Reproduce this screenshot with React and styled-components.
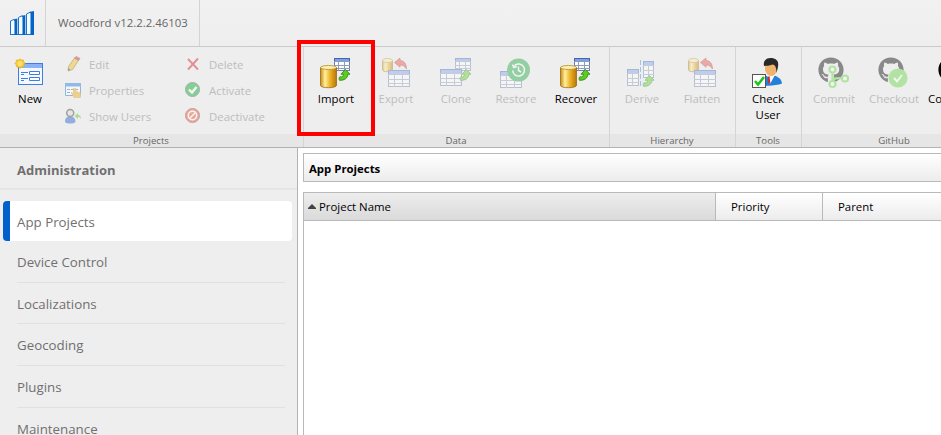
import React from "react";
import styled, { createGlobalStyle, css } from "styled-components";
import { FaGithub } from "react-icons/fa";

const Global = createGlobalStyle`
  * { box-sizing: border-box; }
  html, body { margin: 0; height: 100%; overflow: hidden; }
  body { font-family: "Open Sans", "Noto Sans", sans-serif; font-size: 11.4px; color: #000; background: #fff; }
  #root { height: 100%; }
`;

const Window = styled.div`
  position: relative;
  display: flex;
  flex-direction: column;
  width: 941px;
  height: 435px;
  overflow: hidden;
`;

const TopBar = styled.header`
  display: flex;
  flex: none;
  height: 47px;
  background: linear-gradient(#f1f1f1, #eeeeee);
  border-bottom: 1px solid #cacaca;
`;

const LogoCell = styled.div`
  width: 46px;
  padding: 10px 0 0 9px;
  border-right: 1px solid #d4d4d4;
`;

const TitleCell = styled.div`
  width: 154px;
  padding-left: 12px;
  line-height: 46px;
  color: #666;
  white-space: nowrap;
  border-right: 1px solid #d4d4d4;
`;

const Ribbon = styled.div`
  display: flex;
  flex: none;
  height: 101px;
  background: #eee;
  border-bottom: 1px solid #b2b2b2;
`;

const Group = styled.section`
  display: flex;
  flex: none;
  flex-direction: column;
  width: ${(p) => p.$width}px;
  border-right: 1px solid #d4d4d4;
`;

const GroupBody = styled.div`
  display: flex;
  flex: 1;
  padding-left: ${(p) => p.$inset ?? 2}px;
`;

const GroupLabel = styled.div`
  height: 13px;
  line-height: 13px;
  padding-right: 1px;
  font-size: 9.6px;
  text-align: center;
  color: #666;
  background: #e6e6e6;
`;

const BigButton = styled.div`
  flex: none;
  width: 60px;
  padding: 10px 2px 0;
  line-height: 16px;
  text-align: center;
  color: ${(p) => (p.$disabled ? "#bdbdbd" : "#000")};
  svg { display: block; margin: 0 auto 2px; opacity: ${(p) => (p.$disabled ? 0.42 : 1)}; }
  svg svg { opacity: 1; }
`;

const SmallColumn = styled.div`
  display: flex;
  flex-direction: column;
  width: 120px;
  padding: 4px 0 0 5px;
`;

const SmallButton = styled.div`
  display: flex;
  align-items: center;
  gap: 8px;
  height: 26px;
  color: #bdbdbd;
  white-space: nowrap;
  svg { flex: none; opacity: 0.5; }
`;

const Body = styled.div`
  display: flex;
  flex: 1;
  min-height: 0;
`;

const Sidebar = styled.nav`
  flex: none;
  width: 298px;
  background: #eee;
  border-right: 1px solid #b2b2b2;
  color: #707070;
  font-size: 13.3px;
`;

const SidebarTitle = styled.div`
  height: 42px;
  padding-left: 17px;
  line-height: 44px;
  font-size: 13px;
  font-weight: 700;
  border-bottom: 2px solid #e5e5e5;
`;

const navActive = css`
  height: 40px;
  margin: 11px 5px 0 3px;
  padding-left: 7px;
  line-height: 42px;
  background: #fff;
  border: 0 solid #0060cc;
  border-left-width: 7px;
  border-radius: 4px;
`;

const NavItem = styled.div`
  height: 41.67px;
  margin: 0 12px 0 17px;
  line-height: 42px;
  border-bottom: 1px solid #e1e1e1;
  ${(p) => p.$active && navActive}
`;

const Main = styled.main`
  display: flex;
  flex: 1;
  flex-direction: column;
  padding: 5px 0 0 5px;
`;

const PanelTitle = styled.div`
  height: 29px;
  padding-left: 5px;
  line-height: 30px;
  font-size: 11.4px;
  font-weight: 700;
  background: linear-gradient(#fff, #ececec);
  border: 1px solid #b9b9b9;
  border-right: 0;
`;

const Table = styled.div`
  flex: 1;
  margin-top: 10px;
  border: 1px solid #b9b9b9;
  border-width: 1px 0 0 1px;
`;

const HeaderRow = styled.div`
  display: grid;
  grid-template-columns: 412px 107px 1fr;
  height: 28px;
  border-bottom: 1px solid #b9b9b9;
`;

const HeaderCell = styled.div`
  display: flex;
  align-items: center;
  gap: 3px;
  padding: 0 0 1px ${(p) => (p.$sorted ? 4 : 15)}px;
  background: ${(p) => (p.$sorted ? "linear-gradient(#ededed, #dadada)" : "linear-gradient(#fff, #ececec)")};
  border-right: 1px solid #b9b9b9;
  &:last-child { border-right: 0; }
`;

const Highlight = styled.div`
  position: absolute;
  left: 297px;
  top: 40px;
  width: 78px;
  height: 96px;
  border: 4px solid #f00;
`;

const Logo = () => (
  <svg width="27" height="27" viewBox="0 0 27 27">
    <path
      d="M1.500 24.500V11L5.500 9.300M9.500 24.500V7.500L13.500 5.500M17.500 24.500V4L21.500 2M1 24.500h24"
      fill="none"
      stroke="#1a74d2"
    />
    <path fill="#f8fbff" d="M2 24V11.500l3.500-1.500v14zM10 24V8l3.500-1.500V24zM18 24V4.500L21.500 3v21z" />
    <path fill="#0064c8" d="M4.500 9.500L8.300 8.500V25H5.500V11zM12.500 6L16.300 5v20h-2.800V7zM20.500 2L25 1v24h-3.500V3.500z" />
  </svg>
);

/* Database table with a tinted heading row */
const Grid = ({ x, y, w, h, rows = 4, cols = 3 }) => (
  <g>
    <rect x={x + 0.5} y={y + 0.5} width={w - 1} height={h - 1} fill="#fff" stroke="#6c7fa8" />
    {Array.from({ length: rows - 1 }, (_, i) => (
      <path key={`r${i}`} d={`M${x} ${Math.round(y + ((i + 1) * h) / rows) + 0.5}h${w}`} stroke="#8f9cb8" />
    ))}
    {Array.from({ length: cols - 1 }, (_, i) => (
      <path key={`c${i}`} d={`M${Math.round(x + ((i + 1) * w) / cols) - 0.5} ${y}v${h}`} stroke="#8f9cb8" />
    ))}
    <rect x={x} y={y} width={w} height={Math.round(h / rows)} fill="#3f68b4" />
    <rect x={x + 1} y={y + 1} width={w - 2} height={Math.round(h / rows) - 1} fill="#7ba0e8" />
  </g>
);

const Cylinder = ({ x, y, w, h, id }) => (
  <g>
    <defs>
      <linearGradient id={id}>
        <stop offset="0" stopColor="#c98c10" />
        <stop offset=".28" stopColor="#fff0a0" />
        <stop offset=".6" stopColor="#edb325" />
        <stop offset="1" stopColor="#b87408" />
      </linearGradient>
    </defs>
    <path
      d={`M${x + 0.5} ${y + 2.5}v${h - 5}a${w / 2 - 0.5} 2.200 0 0 0 ${w - 1} 0v${-(h - 5)}z`}
      fill={`url(#${id})`}
      stroke="#9b6a15"
      strokeWidth=".8"
    />
    <ellipse cx={x + w / 2} cy={y + 2.5} rx={w / 2 - 0.5} ry="2" fill="#fff0b0" stroke="#b58a2c" strokeWidth=".8" />
  </g>
);

const GreenArrow = ({ x, y }) => (
  <path
    transform={`translate(${x} ${y})`}
    d="M6.300 .5L11 5.200H8.800C8.900 9 5.500 11.500 .5 11.300C-.2 9.500 .2 8.700 .8 7.800C3.200 8.300 4.400 7.500 4.400 5.200H2z"
    fill="#5ccb22"
    stroke="#2c8c12"
    strokeWidth=".9"
  />
);

const RedArrow = () => (
  <path
    d="M14.500 5.500L20 1v2.600C24 3.600 26.300 6.500 26.500 12C24.500 9 23 8 20 8v2.200z"
    fill="#e94b45"
    stroke="#b42d2d"
    strokeWidth=".8"
  />
);

const Big = ({ children }) => (
  <svg width="32" height="32" viewBox="0 0 32 32">{children}</svg>
);

const NewIcon = () => (
  <Big>
    <rect x="4.500" y="6.500" width="24" height="21" fill="#f5f9ff" stroke="#3c7ee8" />
    <path fill="#8cb2f7" d="M5 7h23v4H5z" />
    <path d="M7 15.500h7M7 17.500h3M7 21.500h7M7 23.500h3" stroke="#3c7ee8" />
    <path d="M15.500 14.500h10v3h-10zM15.500 20.500h10v3h-10z" fill="#fff" stroke="#3c7ee8" />
    <path
      d="M6 1.800l1.300 1.400 1.900-.4.400 1.900 1.600 1.300-1.200 1.600.1 1.900-2 .4L6 11.600l-1.600-1.500-2-.2-.1-2-1.500-1.600 1.500-1.300.1-2 2 .1z"
      fill="#f8c832"
      stroke="#e2a91f"
      strokeWidth=".6"
    />
    <circle cx="6" cy="6.600" r="2.500" fill="#ffe36a" />
  </Big>
);

const ImportIcon = ({ id }) => (
  <Big>
    <Grid x={14} y={1} w={16} h={13} />
    <Cylinder x={0} y={8} w={17} h={23} id={id} />
    <GreenArrow x={19} y={12} />
  </Big>
);

const ExportIcon = ({ id }) => (
  <Big>
    <Cylinder x={2} y={1} w={11} h={14} id={id} />
    <RedArrow />
    <Grid x={8} y={13} w={22} h={17} />
  </Big>
);

const CloneIcon = () => (
  <Big>
    <Grid x={15} y={1} w={16} h={13} />
    <Grid x={0} y={12} w={22} h={17} />
    <GreenArrow x={20} y={12} />
  </Big>
);

const RestoreIcon = () => (
  <Big>
    <Grid x={0} y={14} w={22} h={17} />
    <circle cx="18.500" cy="13" r="11.500" fill="#15a63c" />
    <path
      d="M12.600 13.500a6 6 0 1 0 1.700-4.700M12.500 7.500l1.300 3 3-1M18.500 9.500v4l2.800 1.700"
      fill="none"
      stroke="#fff"
      strokeWidth="1.500"
    />
  </Big>
);

const DeriveIcon = () => (
  <Big>
    <Grid x={1} y={12} w={12} h={17} cols={2} />
    <Grid x={17} y={4} w={11} h={17} cols={2} />
    <path d="M14.500 3v27" stroke="#2f8ce8" strokeDasharray="5 2" />
    <GreenArrow x={17} y={18} />
  </Big>
);

const CheckUserIcon = () => (
  <Big>
    <path d="M9 28c0-5 1-8 7-9.500h6c5 1.500 7.500 4 8 8-5 2-15 3-21 1.500z" fill="#2280d9" />
    <path d="M15 18l3 9 5-9z" fill="#fff" />
    <path d="M15.500 20l2-1 1 8-2-1z" fill="#d9272d" />
    <path d="M13 8c0-5 12-5 12 0v5c-1 4-3 6-6 6s-5-3-6-6z" fill="#f0b36d" />
    <path d="M12 9C11 4 14 1 18.500 1s9 2 7.500 9l-1.500 6c0-5-1-8-4-8.500-3 1.500-6 1-8.500 1.500z" fill="#292929" />
    <rect x=".5" y="17.500" width="13" height="13" fill="#fff" stroke="#555" />
    <path d="M3 24l3 3.500L12 20" fill="none" stroke="#17c51c" strokeWidth="2.500" />
  </Big>
);

const OctoIcon = ({ badge }) => (
  <Big>
    <FaGithub x="0" y="0" size={26} color="#000" />
    {badge === "graph" && (
      <g fill="#fff" stroke="#5fd43a" strokeWidth="2.200">
        <path d="M14.500 13v14M14.500 24c1-3 5-3 10-3" fill="none" />
        <circle cx="14.500" cy="12.500" r="3" />
        <circle cx="14.500" cy="27" r="3" />
        <circle cx="27" cy="21.500" r="3" />
      </g>
    )}
    {badge === "check" && (
      <g>
        <circle cx="20" cy="21" r="9.500" fill="#5fd43a" />
        <path d="M16 21l3 3.500 5-6.500" fill="none" stroke="#fff" strokeWidth="2" />
      </g>
    )}
  </Big>
);

const Small = ({ children }) => (
  <svg width="16" height="16" viewBox="0 0 16 16">{children}</svg>
);

const PencilIcon = () => (
  <Small>
    <path d="M3.500 10.500L9.500 2l4 2.500-6 9L3 15z" fill="#f3c331" stroke="#8b6d25" strokeWidth=".8" />
    <path d="M9.500 2L11 .5l4 2L13.500 4.500z" fill="#d84848" stroke="#a14040" strokeWidth=".8" />
    <path d="M3 15l.4-3 2 1.500z" fill="#555" />
  </Small>
);

const PropertiesIcon = () => (
  <Small>
    <path d="M.5 1.500h15v12H.5z" fill="#fff" stroke="#3681d6" />
    <path d="M0 1h16v3.500H0z" fill="#3988e0" />
    <path d="M2 7.500h3M6 7.500h3M10 7.500h3M2 10.500h3" stroke="#3681d6" />
    <path
      d="M8.500 6.500v5L6 10.500l3 5h6.500V11L11 9.500v-3z"
      fill="#efb32e"
      stroke="#d3962a"
      strokeWidth=".6"
    />
  </Small>
);

const ShowUsersIcon = () => (
  <Small>
    <path d="M0 14c0-4 1.500-5.500 5-5.500s5.500 1.500 5.500 5.500c-2 2-8.500 2-10.500 0z" fill="#3a6fd0" />
    <circle cx="5.200" cy="5" r="3.500" fill="#ddd" stroke="#555" strokeWidth="1.500" />
    <path d="M9.500 8l3.500-3v2c2 0 3 1.500 3 4-1-1.500-1.500-2-3-2v2z" fill="#6acd36" />
  </Small>
);

const DeleteIcon = () => (
  <Small>
    <path d="M3 3l10 10.500M13 2.500L3 13.500" stroke="#d9333a" strokeWidth="1.900" />
  </Small>
);

const ActivateIcon = () => (
  <Small>
    <circle cx="7.500" cy="7.500" r="7" fill="#1fb23f" stroke="#557a58" />
    <path d="M4 7.500l3 3L11.500 5" fill="none" stroke="#fff" strokeWidth="2.400" />
  </Small>
);

const DeactivateIcon = () => (
  <Small>
    <circle cx="7.500" cy="7.500" r="7" fill="#ea6045" stroke="#a1503e" />
    <circle cx="7.500" cy="7.500" r="4.200" fill="none" stroke="#fff" strokeWidth="1.500" />
    <path d="M4.500 10.500l6-6" stroke="#fff" strokeWidth="1.500" />
  </Small>
);

const projectActions = [
  [
    ["Edit", PencilIcon],
    ["Properties", PropertiesIcon],
    ["Show Users", ShowUsersIcon],
  ],
  [
    ["Delete", DeleteIcon],
    ["Activate", ActivateIcon],
    ["Deactivate", DeactivateIcon],
  ],
];

const groups = [
  {
    label: "Data",
    width: 306,
    buttons: [
      { text: "Import", icon: <ImportIcon id="import" /> },
      { text: "Export", icon: <ExportIcon id="export" />, disabled: true },
      { text: "Clone", icon: <CloneIcon />, disabled: true },
      { text: "Restore", icon: <RestoreIcon />, disabled: true },
      { text: "Recover", icon: <ImportIcon id="recover" /> },
    ],
  },
  {
    label: "Hierarchy",
    width: 126,
    buttons: [
      { text: "Derive", icon: <DeriveIcon />, disabled: true },
      { text: "Flatten", icon: <ExportIcon id="flatten" />, disabled: true },
    ],
  },
  { label: "Tools", width: 66, buttons: [{ text: "Check User", icon: <CheckUserIcon /> }] },
  {
    label: "GitHub",
    width: 186,
    buttons: [
      { text: "Commit", icon: <OctoIcon badge="graph" />, disabled: true },
      { text: "Checkout", icon: <OctoIcon badge="check" />, disabled: true },
      { text: "Configure", icon: <OctoIcon /> },
    ],
  },
];

const navItems = ["App Projects", "Device Control", "Localizations", "Geocoding", "Plugins", "Maintenance"];

export default function App() {
  return (
    <Window>
      <Global />
      <TopBar>
        <LogoCell><Logo /></LogoCell>
        <TitleCell>Woodford v12.2.2.46103</TitleCell>
      </TopBar>
      <Ribbon>
        <Group $width={304}>
          <GroupBody $inset={0}>
            <BigButton><NewIcon />New</BigButton>
            {projectActions.map((column, i) => (
              <SmallColumn key={i}>
                {column.map(([text, Icon]) => (
                  <SmallButton key={text}><Icon />{text}</SmallButton>
                ))}
              </SmallColumn>
            ))}
          </GroupBody>
          <GroupLabel>Projects</GroupLabel>
        </Group>
        {groups.map((g) => (
          <Group key={g.label} $width={g.width}>
            <GroupBody>
              {g.buttons.map((b) => (
                <BigButton key={b.text} $disabled={b.disabled}>{b.icon}{b.text}</BigButton>
              ))}
            </GroupBody>
            <GroupLabel>{g.label}</GroupLabel>
          </Group>
        ))}
      </Ribbon>
      <Body>
        <Sidebar>
          <SidebarTitle>Administration</SidebarTitle>
          {navItems.map((item, i) => (
            <NavItem key={item} $active={i === 0}>{item}</NavItem>
          ))}
        </Sidebar>
        <Main>
          <PanelTitle>App Projects</PanelTitle>
          <Table>
            <HeaderRow>
              <HeaderCell $sorted>
                <svg width="8" height="5" viewBox="0 0 8 5"><path d="M4 0L8 4v1H0V4z" fill="#444" /></svg>
                Project Name
              </HeaderCell>
              <HeaderCell>Priority</HeaderCell>
              <HeaderCell>Parent</HeaderCell>
            </HeaderRow>
          </Table>
        </Main>
      </Body>
      <Highlight />
    </Window>
  );
}
